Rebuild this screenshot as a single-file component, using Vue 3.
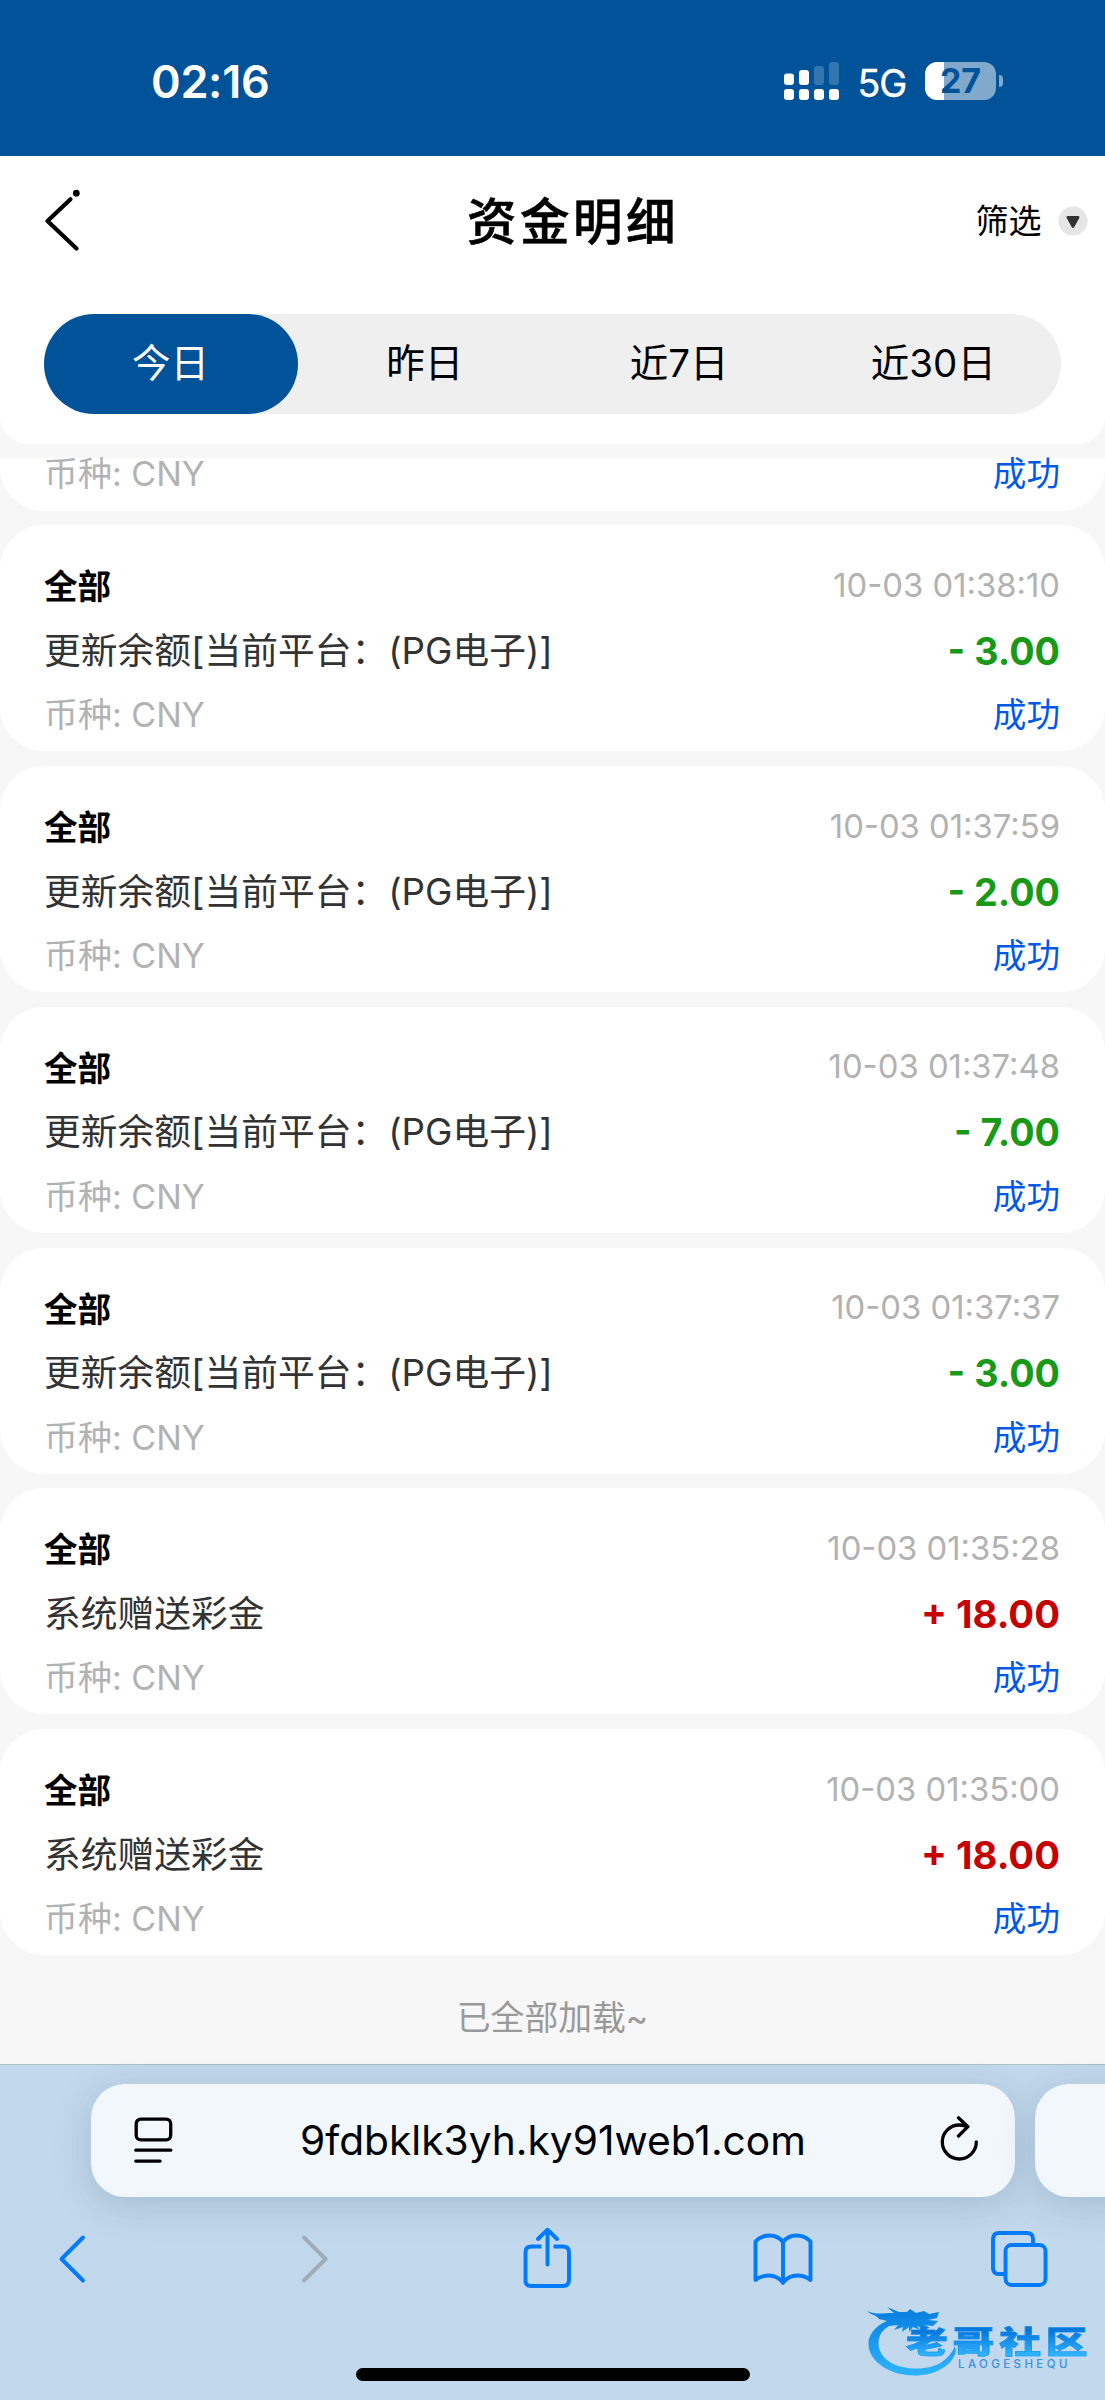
<script setup>
const tabs = ['今日', '昨日', '近7日', '近30日']
const pg = '更新余额[当前平台：(PG电子)]'
const rows = [
  { title: pg, time: '10-03 01:38:10', amount: '- 3.00', gain: false },
  { title: pg, time: '10-03 01:37:59', amount: '- 2.00', gain: false },
  { title: pg, time: '10-03 01:37:48', amount: '- 7.00', gain: false },
  { title: pg, time: '10-03 01:37:37', amount: '- 3.00', gain: false },
  { title: '系统赠送彩金', time: '10-03 01:35:28', amount: '+ 18.00', gain: true },
  { title: '系统赠送彩金', time: '10-03 01:35:00', amount: '+ 18.00', gain: true },
]
</script>

<template>
  <div class="screen">
    <div class="status">
      <span class="clock">02:16</span>
      <div class="status-right">
        <svg class="signal" width="56" height="38" viewBox="0 0 56 38" fill="#fff">
          <rect x="0" y="11.500" width="10" height="11.500" rx="3" />
          <rect x="15" y="8" width="10" height="15" rx="3" />
          <rect x="30" y="4" width="10" height="19" rx="3" opacity=".2" />
          <rect x="45" y="0" width="10" height="23" rx="3" opacity=".2" />
          <rect v-for="i in 4" :key="i" :x="(i - 1) * 15" y="27" width="10" height="11" rx="3" />
        </svg>
        <span class="net">5G</span>
        <div class="battery"><span>27</span></div>
        <i class="nub"></i>
      </div>
    </div>

    <header class="head">
      <div class="nav">
        <svg width="40" height="66" viewBox="0 0 40 66" fill="none" stroke="#000" stroke-width="4.200" stroke-linecap="round" stroke-linejoin="round">
          <path d="M26.500 12.200 3.500 34 32.500 61.500" />
          <circle cx="32.300" cy="6.200" r="3.400" fill="#000" stroke="none" />
        </svg>
        <h1>资金明细</h1>
        <div class="filter">
          <span>筛选</span>
          <svg width="30" height="30" viewBox="0 0 30 30">
            <circle cx="15" cy="15" r="14.600" fill="#e6e6e6" />
            <path d="M9.500 10h11q1.500 0 .8 2l-5.100 9.200q-1.200 1.600-2.400 0L8.700 12q-.7-2 .8-2z" fill="#333" />
          </svg>
        </div>
      </div>
      <div class="tabs">
        <span v-for="(t, i) in tabs" :key="t" :class="{ active: i === 0 }">{{ t }}</span>
      </div>
    </header>

    <main class="list">
      <div class="card cut">
        <div class="line"><span class="cur">币种: CNY</span><span class="ok">成功</span></div>
      </div>
      <div v-for="r in rows" :key="r.time" class="card">
        <div class="line l1"><b>全部</b><span class="time">{{ r.time }}</span></div>
        <div class="line l2"><span class="desc">{{ r.title }}</span><span class="amt" :class="{ gain: r.gain }">{{ r.amount }}</span></div>
        <div class="line l3"><span class="cur">币种: CNY</span><span class="ok">成功</span></div>
      </div>
      <p class="end">已全部加载~</p>
    </main>

    <footer class="browser">
      <div class="bars">
        <div class="url">
          <svg width="40" height="48" viewBox="0 0 40 48" fill="none" stroke="#000" stroke-width="3.300" stroke-linecap="round">
            <rect x="2.200" y="3.200" width="34.500" height="20.600" rx="4.500" />
            <path d="M1.800 34.200h35M1.800 45.100h24.300" />
          </svg>
          <span>9fdbklk3yh.ky91web1.com</span>
          <svg width="40" height="48" viewBox="0 0 40 48" fill="none" stroke="#000" stroke-width="3.300" stroke-linecap="round" stroke-linejoin="round">
            <path d="M36.300 25.800A17 17 0 1 1 19.500 9Q24 9 27.800 10.700M18.500 1.800 27.900 10.700 18.500 20" />
          </svg>
        </div>
        <div class="url next"></div>
      </div>
      <div class="tools">
        <div class="tool"><svg width="30" height="62" viewBox="0 0 30 62" stroke="#007aff"><path d="M25 10.500 3.500 32 25 53.500" /></svg></div>
        <div class="tool"><svg width="40" height="62" viewBox="0 0 40 62" stroke="#a0adb9"><path d="M14 10.500 35.500 32 14 53.500" /></svg></div>
        <div class="tool"><svg width="50" height="62" viewBox="0 0 50 62" stroke="#007aff"><path stroke-linecap="butt" d="M20.500 19.500H10.500q-6 0-6 6V54q0 5 6 5h31.500q6 0 6-6V25.500q0-6-6-6H32.500" /><path d="M26.500 37.500V3.500M17 12l9.500-9.300 9.500 9.300" /></svg></div>
        <div class="tool"><svg width="62" height="62" viewBox="-1 0 62 62" stroke="#007aff"><path d="M31 15v41M31 15Q26 8.500 17.500 8.500 9 8.500 3.500 14.500V53q5.500-4.500 13.500-4.500 8 0 14 7 6-7 14-7 8 0 13.500 4.500V14.500Q53 8.500 44.500 8.500 36 8.500 31 15z" /></svg></div>
        <div class="tool"><svg width="58" height="62" viewBox="0 0 58 62" stroke="#007aff"><path d="M14 47H9q-6 0-6-6V12q0-6 6-6h28q6 0 6 6v6" /><rect x="15.500" y="18" width="40" height="40" rx="6" /></svg></div>
      </div>
      <div class="home"></div>
      <div class="mark">
        <svg width="100" height="72" viewBox="0 0 100 72">
          <defs>
            <linearGradient id="ring" gradientUnits="userSpaceOnUse" x1="0" y1="8" x2="0" y2="62">
              <stop offset="0" stop-color="#0a82e2" /><stop offset="1" stop-color="#2bb0fd" />
            </linearGradient>
          </defs>
          <g fill="url(#ring)">
            <path d="M31 10C12 15 1.500 25 1.500 37 1.500 54 22 68.500 47 68.500 69 68.500 86 58 89 44L88 39C82 53 70 60.500 53 61.500 30 62.500 11.500 53 11.500 36 11.500 25 20 17 36 15z" />
            <path d="M0 4c7 3 14 3 21 2l6 0-7-6 12 5 8 0 3-3 6 4 8-2 5 3 10-2-2 6-9 2 10 1-5 5-8-1 5 3-6 1-7-3 3 4-7-3-4 5 0-5-7 5 1-5-9 3 4-5-9 1 2-4-12-3C10 8 4 8 0 4z" />
          </g>
        </svg>
        <strong>老哥社区</strong>
        <em>LAOGESHEQU</em>
      </div>
    </footer>
  </div>
</template>

<style>
body { margin: 0; }
</style>

<style scoped>
.screen { width: 1105px; height: 2400px; overflow: hidden; position: relative; display: flex; flex-direction: column; background: #f7f7f7; font-family: Inter, "Noto Sans CJK SC", sans-serif; color: #000; }
.screen > * { flex: none; box-sizing: border-box; }
.status { height: 155.500px; background: #005399; color: #fff; display: flex; justify-content: space-between; align-items: flex-start; padding: 62px 102px 0 151px; }
.clock { font-size: 45px; line-height: 40px; font-weight: 600; letter-spacing: -.3px; }
.status-right { display: flex; align-items: flex-start; height: 38px; }
.net { font-size: 37.500px; line-height: 43px; margin: 0 19px 0 18px; font-weight: 400; letter-spacing: -1.200px; -webkit-text-stroke: .4px #fff; }
.battery { width: 71px; height: 38px; border-radius: 12px; background: linear-gradient(90deg, #fff 19px, #80a9cc 19px); color: #005399; text-align: center; font-size: 34px; line-height: 38px; font-weight: 700; }
.nub { width: 4px; height: 12px; margin: 13px 0 0 3px; background: #80a9cc; border-radius: 0 6px 6px 0; }
.head { height: 288px; background: #fff; border-radius: 0 0 28px 28px; padding: 0 44px; }
.nav { height: 158px; display: flex; align-items: flex-start; padding-top: 31px; box-sizing: border-box; margin-right: -27px; }
h1 { margin: 0 auto 0 383px; font-size: 49.500px; line-height: 71px; letter-spacing: 3.500px; font-weight: 500; -webkit-text-stroke: .6px #000; }
.filter { display: flex; align-items: center; gap: 16.500px; height: 68px; font-size: 33px; line-height: 40px; }
.tabs { height: 100px; display: flex; border-radius: 50px; background: #efefef; }
.tabs span { flex: 1; text-align: center; font-size: 38.500px; line-height: 99px; border-radius: 50px; text-indent: -1px; }
.tabs .active { background: #005399; color: #fff; }
.list { padding-top: 14px; display: flex; flex-direction: column; gap: 14.800px; height: 1620px; }
.card { height: 226px; flex: none; background: #fff; border-radius: 44px; padding: 36px 45px 0 44px; box-sizing: border-box; }
.card.cut { height: 53px; border-radius: 0 0 44px 44px; padding-top: 0; }
.line { display: flex; justify-content: space-between; align-items: center; font-size: 33.600px; line-height: 50px; height: 50px; }
.cut .line { height: 32px; }
.l1 b { position: relative; top: 1px; }
.l1 .time { position: relative; top: -1.500px; font-size: 32.800px; }
.l2 { height: 79px; font-size: 36.750px; color: #333; }
.cur, .time { color: #b2b2b2; }
.cur { font-size: 34px; }
.ok { color: #0058e6; }
.amt { color: #189a18; font-size: 37.700px; font-weight: 700; }
.amt.gain { color: #c60000; font-size: 38.300px; }
.end { margin: 28px 0 0; text-align: center; font-size: 33.800px; line-height: 40px; color: #999; }
.browser { height: 337px; background: #c2d8ec; border-top: 1px solid #aebfce; position: relative; }
.bars { display: flex; gap: 20px; padding: 19px 0 0 91px; height: 150px; box-sizing: border-box; }
.url { flex: none; width: 924px; height: 113px; box-sizing: border-box; border-radius: 34px; background: #f2f7fc; box-shadow: 0 8px 36px rgba(60, 90, 120, .22); display: flex; align-items: center; justify-content: space-between; padding: 0 35px 0 43px; font-size: 40.700px; }
.url span { position: relative; left: -4px; }
.tools { position: relative; display: flex; width: 1182px; margin-left: -45px; padding-top: 12.500px; }
.tool { flex: 1; display: flex; justify-content: center; }
.tools svg { fill: none; stroke-width: 3.900; stroke-linecap: round; stroke-linejoin: round; }
.home { width: 394px; height: 13px; border-radius: 7px; background: #000; position: absolute; left: 356px; top: 303px; }
.mark { position: absolute; left: 867px; top: 242px; width: 225px; height: 72px; }
.mark svg { display: block; }
strong { position: absolute; left: 39px; top: 19px; font-size: 31px; line-height: 32px; font-weight: 900; letter-spacing: 3.500px; white-space: nowrap; color: transparent; background: linear-gradient(#0878df 20%, #2fb4ff 90%); background-clip: text; -webkit-text-stroke: .6px rgba(20, 146, 238, .8); transform: scaleX(1.35); transform-origin: 0 0; }
em { position: absolute; left: 91px; top: 51px; font-style: normal; font-size: 11.500px; line-height: 12px; letter-spacing: 3.400px; font-weight: 500; color: #3a92de; }
</style>
